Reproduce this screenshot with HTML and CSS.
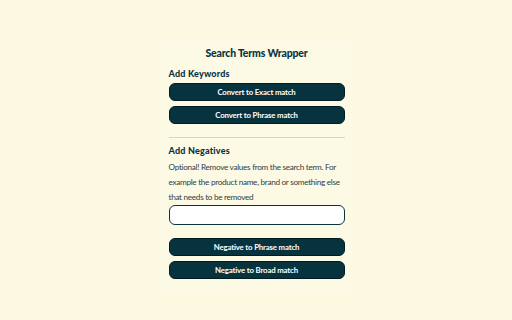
FILE: index.html
```html
<!DOCTYPE html>
<html>
<head>
    <link rel="stylesheet" href="styles.css">
</head>
<body>
    <div class="panel">
        <h1 class="title">Search Terms Wrapper</h1>

        <div class="section">
            <h2 class="label">Add Keywords</h2>
            <button class="btn">Convert to Exact match</button>
            <button class="btn">Convert to Phrase match</button>
        </div>

        <hr class="divider">

        <div class="section">
            <h2 class="label">Add Negatives</h2>
            <p class="hint">Optional! Remove values from the search term. For example the product name, brand or something else that needs to be removed</p>
            <input type="text" class="field">
            <div class="neg-buttons">
                <button class="btn">Negative to Phrase match</button>
                <button class="btn">Negative to Broad match</button>
            </div>
        </div>
    </div>
</body>
</html>
```

FILE: styles.css
```css
body, html {
margin: 0;
padding: 0;
height: 100%;
}

body {
background-color: #fdf9e1;
font-family: Lato, "Open Sans", sans-serif;
color: #0b3440;
display: flex;
justify-content: center;
}

.panel {
width: 176px;
margin-top: 35px;
padding: 8px 8px 12px 9px;
background-color: #fcf9e5;
align-self: flex-start;
}

.title {
margin: 4px 0 10px 0;
font-size: 10.5px;
font-weight: 900;
letter-spacing: -0.2px;
text-align: center;
}

.label {
margin: 0 0 4px 0;
font-size: 9px;
line-height: 10px;
font-weight: 900;
letter-spacing: 0.2px;
}

.btn {
display: block;
width: 100%;
height: 18px;
margin-bottom: 5px;
padding: 0;
background-color: #07333f;
border: 1px solid #021c24;
border-radius: 6px;
color: #fff;
font-family: Lato, "Open Sans", sans-serif;
font-size: 7.8px;
font-weight: 700;
letter-spacing: -0.15px;
}

.divider {
margin: 13px 0 8px 0;
border: none;
border-top: 1px solid #d8d5bd;
}

.hint {
margin: 0;
font-size: 8.2px;
line-height: 15px;
letter-spacing: -0.3px;
color: #2e3f42;
}

.field {
display: block;
box-sizing: border-box;
width: 100%;
height: 20px;
margin: 0;
background-color: #fff;
border: 1px solid #0b3440;
border-radius: 6px;
}

.neg-buttons {
margin-top: 13px;
}
```
